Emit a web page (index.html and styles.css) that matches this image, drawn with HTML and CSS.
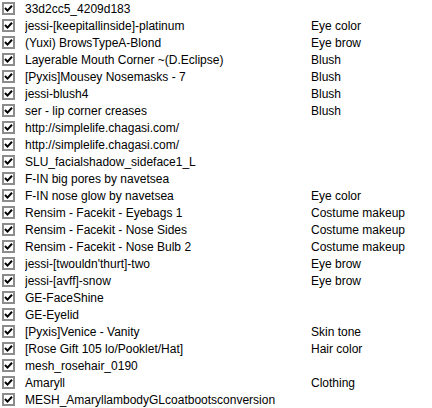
FILE: index.html
```html
<!DOCTYPE html>
<html>
<head>
<meta charset="utf-8">
<link rel="stylesheet" href="styles.css">
</head>
<body>
<ul class="list">
<li class="row"><span class="cb"></span><span class="name">33d2cc5_4209d183</span><span class="type"></span></li>
<li class="row"><span class="cb"></span><span class="name">jessi-[keepitallinside]-platinum</span><span class="type">Eye color</span></li>
<li class="row"><span class="cb"></span><span class="name">(Yuxi) BrowsTypeA-Blond</span><span class="type">Eye brow</span></li>
<li class="row"><span class="cb"></span><span class="name">Layerable Mouth Corner ~(D.Eclipse)</span><span class="type">Blush</span></li>
<li class="row"><span class="cb"></span><span class="name">[Pyxis]Mousey Nosemasks - 7</span><span class="type">Blush</span></li>
<li class="row"><span class="cb"></span><span class="name">jessi-blush4</span><span class="type">Blush</span></li>
<li class="row"><span class="cb"></span><span class="name">ser - lip corner creases</span><span class="type">Blush</span></li>
<li class="row"><span class="cb"></span><span class="name">http://simplelife.chagasi.com/</span><span class="type"></span></li>
<li class="row"><span class="cb"></span><span class="name">http://simplelife.chagasi.com/</span><span class="type"></span></li>
<li class="row"><span class="cb"></span><span class="name">SLU_facialshadow_sideface1_L</span><span class="type"></span></li>
<li class="row"><span class="cb"></span><span class="name">F-IN big pores by navetsea</span><span class="type"></span></li>
<li class="row"><span class="cb"></span><span class="name">F-IN nose glow by navetsea</span><span class="type">Eye color</span></li>
<li class="row"><span class="cb"></span><span class="name">Rensim - Facekit - Eyebags 1</span><span class="type">Costume makeup</span></li>
<li class="row"><span class="cb"></span><span class="name">Rensim - Facekit - Nose Sides</span><span class="type">Costume makeup</span></li>
<li class="row"><span class="cb"></span><span class="name">Rensim - Facekit - Nose Bulb 2</span><span class="type">Costume makeup</span></li>
<li class="row"><span class="cb"></span><span class="name">jessi-[twouldn'thurt]-two</span><span class="type">Eye brow</span></li>
<li class="row"><span class="cb"></span><span class="name">jessi-[avff]-snow</span><span class="type">Eye brow</span></li>
<li class="row"><span class="cb"></span><span class="name">GE-FaceShine</span><span class="type"></span></li>
<li class="row"><span class="cb"></span><span class="name">GE-Eyelid</span><span class="type"></span></li>
<li class="row"><span class="cb"></span><span class="name">[Pyxis]Venice - Vanity</span><span class="type">Skin tone</span></li>
<li class="row"><span class="cb"></span><span class="name">[Rose Gift 105 lo/Pooklet/Hat]</span><span class="type">Hair color</span></li>
<li class="row"><span class="cb"></span><span class="name">mesh_rosehair_0190</span><span class="type"></span></li>
<li class="row"><span class="cb"></span><span class="name">Amaryll</span><span class="type">Clothing</span></li>
<li class="row"><span class="cb"></span><span class="name">MESH_AmaryllambodyGLcoatbootsconversion</span><span class="type"></span></li>
</ul>
</body>
</html>
```
FILE: styles.css
```css
html, body {
  margin: 0;
  padding: 0;
  background: #ffffff;
}
body {
  width: 432px;
  height: 408px;
  overflow: hidden;
  font-family: "Liberation Sans", Arial, sans-serif;
  font-size: 12px;
  color: #000000;
}
.list {
  list-style: none;
  margin: 0;
  padding: 0;
}
.row {
  display: flex;
  align-items: center;
  height: 17px;
  white-space: nowrap;
}
.cb {
  flex: none;
  box-sizing: border-box;
  width: 13px;
  height: 13px;
  margin-left: 2px;
  margin-right: 10px;
  border: 2px solid #8c8c8c;
  background: #ffffff url("data:image/svg+xml,%3Csvg xmlns='http://www.w3.org/2000/svg' width='9' height='9' viewBox='0 0 9 9'%3E%3Cpath d='M1 4 L3.5 6.6 L8 1.8' fill='none' stroke='%23000' stroke-width='2'/%3E%3C/svg%3E") center / 9px 9px no-repeat;
}
.name {
  flex: none;
  width: 286px;
  overflow: hidden;
}
.type {
  flex: none;
}
```
